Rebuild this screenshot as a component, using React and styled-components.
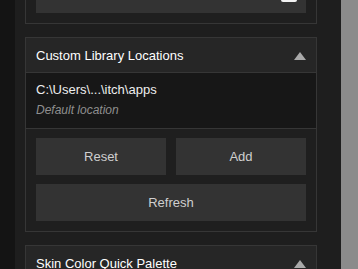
import React from "react";
import styled, { createGlobalStyle } from "styled-components";

const GlobalStyle = createGlobalStyle`
  *, *::before, *::after {
    box-sizing: border-box;
  }
  html, body {
    margin: 0;
    padding: 0;
    background: #1e1e1e;
    overflow: hidden;
  }
  body {
    font-family: "Liberation Sans", Arial, sans-serif;
  }
`;

const Layout = styled.div`
  width: 358px;
  height: 269px;
  display: flex;
  overflow: hidden;
`;

const SideStrip = styled.div`
  width: 15px;
  flex: 0 0 15px;
  background: #141414;
`;

const Panel = styled.div`
  flex: 1;
  background: #1e1e1e;
  padding: 0 24px 0 10px;
  overflow: hidden;
`;

// the panel is scrolled, so the first card starts above the window
const Scroller = styled.div`
  display: flex;
  flex-direction: column;
  gap: 13px;
  margin-top: -38px;
`;

const ScrollBar = styled.div`
  width: 17px;
  flex: 0 0 17px;
  background: #8b8b8b;
`;

const Card = styled.section`
  border: 1px solid #363636;
  background: #1f1f1f;
`;

const Header = styled.div`
  height: ${(p) => (p.open ? "35px" : "34px")};
  display: flex;
  align-items: center;
  justify-content: space-between;
  padding: 0 10px;
  background: #262626;
  border-bottom: ${(p) => (p.open ? "1px solid #363636" : "none")};
`;

const Title = styled.h3`
  margin: 0;
  font-size: 13px;
  font-weight: normal;
  color: #ffffff;
`;

const Caret = styled.span`
  width: 0;
  height: 0;
  border-left: 6px solid transparent;
  border-right: 6px solid transparent;
  border-bottom: 8px solid #a9a9a9;
  margin-top: 1px;
`;

const Body = styled.div`
  padding: ${(p) => p.pad || "10px"};
`;

const PreviewBox = styled.div`
  height: 40px;
  background: #333333;
  display: flex;
  justify-content: flex-end;
  align-items: flex-end;
  padding: 0 9px 11px 0;
`;

const Thumb = styled.span`
  width: 16px;
  height: 12px;
  background: #f2f2f2;
  border-radius: 2px;
`;

const PathList = styled.div`
  height: 56px;
  background: #171717;
  border-bottom: 1px solid #363636;
  padding: 8px 10px 0;
`;

const PathText = styled.div`
  font-size: 13px;
  color: #eeeeee;
  line-height: 17px;
`;

const PathNote = styled.div`
  font-size: 12px;
  font-style: italic;
  color: #8f8f8f;
  line-height: 17px;
  margin-top: 4px;
`;

const ButtonGrid = styled.div`
  display: grid;
  grid-template-columns: 1fr 1fr;
  gap: 9px 10px;
`;

const Button = styled.button`
  grid-column: ${(p) => (p.wide ? "1 / span 2" : "auto")};
  height: 37px;
  border: none;
  border-radius: 0;
  background: #333333;
  color: #cfcfcf;
  font-family: "Liberation Sans", Arial, sans-serif;
  font-size: 13px;
  cursor: pointer;
  padding: 0;
`;

const App = () => {
  return (
    <Layout>
      <GlobalStyle />
      <SideStrip />
      <Panel>
        <Scroller>
          <Card>
            <Body>
              <PreviewBox>
                <Thumb />
              </PreviewBox>
            </Body>
          </Card>

          <Card>
            <Header open>
              <Title>Custom Library Locations</Title>
              <Caret />
            </Header>
            <PathList>
              <PathText>C:\Users\...\itch\apps</PathText>
              <PathNote>Default location</PathNote>
            </PathList>
            <Body pad="9px 10px 10px">
              <ButtonGrid>
                <Button>Reset</Button>
                <Button>Add</Button>
                <Button wide>Refresh</Button>
              </ButtonGrid>
            </Body>
          </Card>

          <Card>
            <Header>
              <Title>Skin Color Quick Palette</Title>
              <Caret />
            </Header>
          </Card>
        </Scroller>
      </Panel>
      <ScrollBar />
    </Layout>
  );
};

export default App;
